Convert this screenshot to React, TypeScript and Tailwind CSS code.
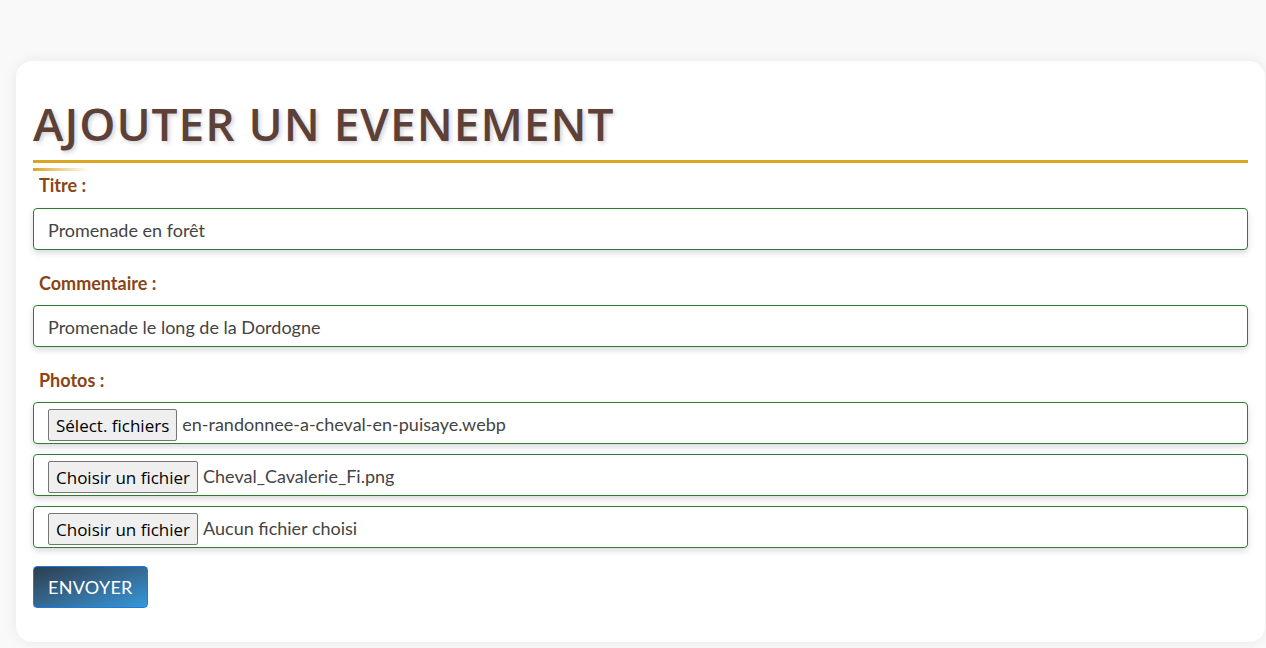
import React from "react";

const files = [
  { button: "Sélect. fichiers", name: "en-randonnee-a-cheval-en-puisaye.webp" },
  { button: "Choisir un fichier", name: "Cheval_Cavalerie_Fi.png" },
  { button: "Choisir un fichier", name: "Aucun fichier choisi" },
];

function Label({ children }: { children: React.ReactNode }) {
  return (
    <label className="block pl-[6px] text-[18px] font-bold text-[#8b4513] leading-[22px] font-['Lato',sans-serif]">
      {children}
    </label>
  );
}

function TextField({ value }: { value: string }) {
  return (
    <div className="h-[42px] flex items-center px-[14px] pt-[2px] border border-[#2e7d32] rounded-[4px] shadow-[0_3px_6px_rgba(0,0,0,0.15)] bg-white text-[18px] text-[#444] font-['Lato',sans-serif]">
      {value}
    </div>
  );
}

function FileField({ button, name }: { button: string; name: string }) {
  return (
    <div className="h-[42px] flex items-center px-[14px] pt-[3px] border border-[#2e7d32] rounded-[4px] shadow-[0_3px_6px_rgba(0,0,0,0.15)] bg-white">
      <span className="h-[32px] flex items-center px-[7px] pt-[2px] border border-[#767676] rounded-[2px] bg-[#efefef] text-[17px] text-black font-['Open_Sans',sans-serif]">
        {button}
      </span>
      <span className="ml-[5px] text-[18px] text-[#444] font-['Lato',sans-serif]">{name}</span>
    </div>
  );
}

export default function App() {
  return (
    <div className="min-h-[648px] bg-[#f9f9f9] pt-[61px] pb-[7px]">
      <div className="ml-4 w-[1249px] bg-white rounded-2xl shadow-[0_0_14px_rgba(0,0,0,0.07)] px-[17px] pt-[36px] pb-[34px]">
        <h1 className="text-[46px] leading-[52px] font-semibold tracking-[1px] uppercase text-[#5d4037] [text-shadow:2px_2px_4px_rgba(0,0,0,0.18)] font-['Open_Sans',sans-serif]">
          Ajouter un evenement
        </h1>
        <div className="mt-[11px] h-[3px] bg-[#daa520]" />
        <div className="mt-[5px] h-[3px] w-[56px] bg-gradient-to-r from-[#daa520] to-transparent" />
        <div className="mt-[3px]">
          <Label>Titre :</Label>
          <div className="mt-[12px]">
            <TextField value="Promenade en forêt" />
          </div>
          <div className="mt-[22px]">
            <Label>Commentaire :</Label>
          </div>
          <div className="mt-[11px]">
            <TextField value="Promenade le long de la Dordogne" />
          </div>
          <div className="mt-[22px]">
            <Label>Photos :</Label>
          </div>
          <div className="mt-[11px] flex flex-col gap-[10px]">
            {files.map((f, i) => (
              <FileField key={i} button={f.button} name={f.name} />
            ))}
          </div>
          <button className="mt-[18px] h-[42px] px-[14px] rounded-[4px] border border-[#1e7ae0] bg-gradient-to-br from-[#2c3e50] to-[#3498db] text-white text-[18px] tracking-[0.3px] uppercase font-['Lato',sans-serif]">
            Envoyer
          </button>
        </div>
      </div>
    </div>
  );
}
